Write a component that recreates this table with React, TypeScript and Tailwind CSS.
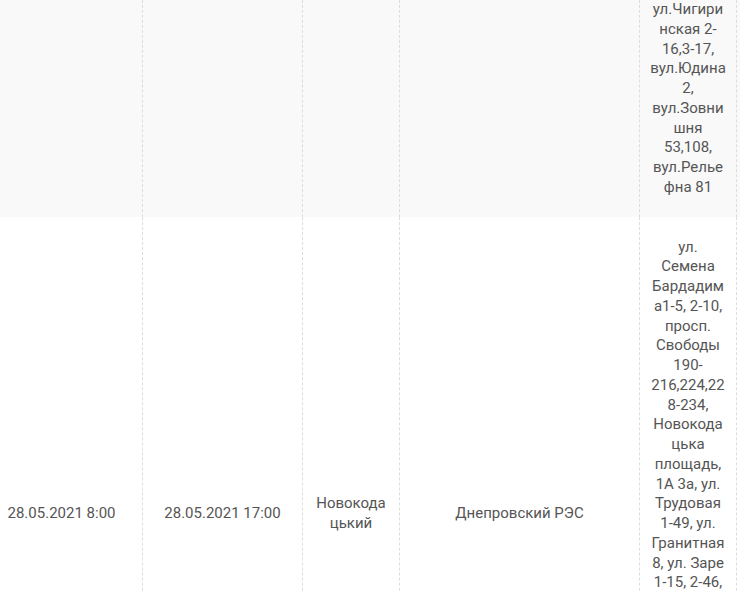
import React from "react";

const cellBase =
  "shrink-0 border-r border-dashed border-[#dddddd] px-[10px] flex items-center justify-center text-center break-words";

export default function App() {
  return (
    <div
      className="w-[740px] h-[592px] overflow-hidden bg-white text-[15px] leading-[19.75px] text-[#555555]"
      style={{ fontFamily: "Roboto, 'Noto Sans', sans-serif" }}
    >
      <div className="ml-[-19px] w-[780px]">
        {/* Row 1 (grey, partially visible) */}
        <div className="flex bg-[#f9f9f9]">
          <div className={`${cellBase} w-[162px]`} />
          <div className={`${cellBase} w-[160px]`} />
          <div className={`${cellBase} w-[97px]`} />
          <div className={`${cellBase} w-[240px]`} />
          <div className={`${cellBase} w-[97px] pb-[19px] items-start`}>
            <div className="w-full">
              ул.Чигиринская 2-16,3-17, вул.Юдина 2, вул.Зовнишня 53,108, вул.Рельефна 81
            </div>
          </div>
          <div className="flex-1" />
        </div>
        {/* Row 2 */}
        <div className="flex bg-white min-h-[594px]">
          <div className={`${cellBase} w-[162px]`}>28.05.2021 8:00</div>
          <div className={`${cellBase} w-[160px]`}>28.05.2021 17:00</div>
          <div className={`${cellBase} w-[97px]`}>
            <div className="w-full">Новокодацький</div>
          </div>
          <div className={`${cellBase} w-[240px]`}>Днепровский РЭС</div>
          <div className={`${cellBase} w-[97px] pt-[21px] pb-[19px] items-start`}>
            <div className="w-full">
              ул. Семена Бардадима1-5, 2-10, просп. Свободы 190-216,224,228-234, Новокодацька площадь, 1А 3а, ул. Трудовая 1-49, ул. Гранитная 8, ул. Заре 1-15, 2-46, ул. Кедрина 1-29
            </div>
          </div>
          <div className="flex-1" />
        </div>
      </div>
    </div>
  );
}
